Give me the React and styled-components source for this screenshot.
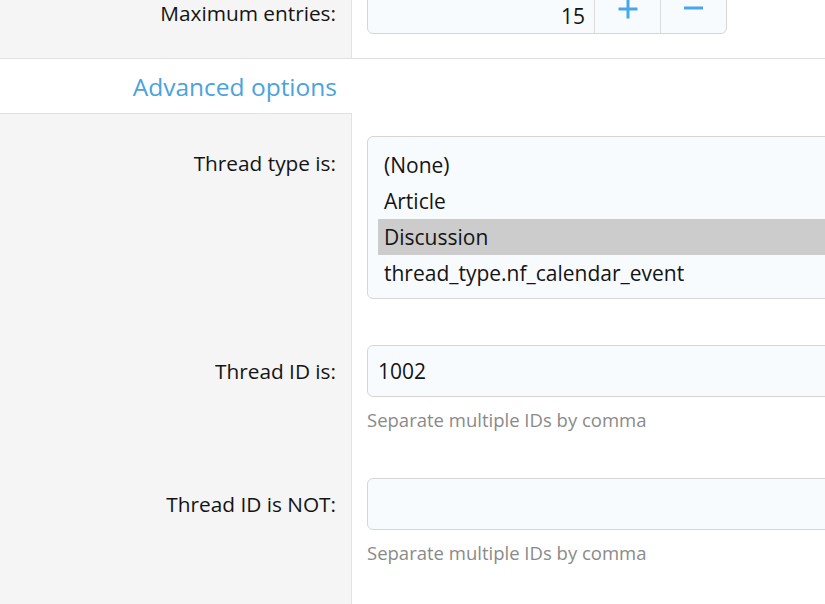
import React from "react";
import styled, { createGlobalStyle } from "styled-components";

const Global = createGlobalStyle`
  html, body { margin: 0; padding: 0; background: #fff; }
  body { overflow: hidden; font-family: "Open Sans", "Noto Sans", sans-serif; color: #141414; }
  * { box-sizing: border-box; }
`;

const Page = styled.div`
  width: 825px;
  height: 604px;
  overflow: hidden;
`;

const Scroll = styled.div`
  margin-top: -17px;
`;

const Block = styled.div`
  display: grid;
  grid-template-columns: 352px 1fr;
  border-bottom: 1px solid #e0e0e0;
`;

const LabelCol = styled.div`
  background: #f5f5f5;
  border-right: 1px solid #e2e2e2;
  padding: 0 15px 0 0;
  text-align: right;
`;

const ValueCol = styled.div`
  padding: 0 0 0 15px;
  min-width: 0;
`;

const Label = styled.div`
  font-size: 20.8px;
  line-height: ${(p) => p.$lh || 28}px;
  white-space: nowrap;
  padding-top: ${(p) => p.$top}px;
  height: ${(p) => p.$h}px;
`;

const Field = styled.div`
  padding-top: ${(p) => p.$top}px;
  height: ${(p) => p.$h}px;
`;

const HeaderRow = styled.div`
  height: 55px;
  border-bottom: 1px solid #e0e0e0;
  display: flex;
  align-items: center;
  justify-content: flex-end;
  width: 352px;
  padding-right: 15px;
  font-size: 24.5px;
  color: #4aa3df;
  white-space: nowrap;
`;

const NumberBox = styled.div`
  display: flex;
  width: 360px;
  height: 51px;
  border: 1px solid #d6d6d6;
  border-radius: 6px;
  background: #f8fbfe;
  overflow: hidden;
`;

const NumberValue = styled.div`
  flex: 1;
  text-align: right;
  padding: 19px 9px 0 0;
  font-size: 21px;
  line-height: 26px;
`;

const StepButton = styled.div`
  width: 66px;
  border-left: 1px solid #dcdcdc;
  display: flex;
  align-items: center;
  justify-content: center;
  padding-bottom: ${(p) => (p.$minus ? 2 : 0)}px;
`;

const ListBox = styled.div`
  width: 620px;
  border: 1px solid #d6d6d6;
  border-radius: 6px;
  background: #f8fbfe;
  padding: 10px 0 7px 10px;
`;

const Option = styled.div`
  height: 36px;
  line-height: 36px;
  padding-left: 6px;
  font-size: 21px;
  white-space: nowrap;
  background: ${(p) => (p.$selected ? "#cccccc" : "transparent")};
`;

const TextInput = styled.div`
  width: 620px;
  height: 52px;
  border: 1px solid #d6d6d6;
  border-radius: 6px;
  background: #f8fbfe;
  padding-left: 10px;
  font-size: 21px;
  line-height: 50px;
`;

const Hint = styled.div`
  margin-top: 10px;
  font-size: 18.5px;
  line-height: 26px;
  color: #8a8a8a;
  white-space: nowrap;
`;

const Plus = () => (
  <svg width="20" height="20" viewBox="0 0 20 20">
    <path d="M10 0.5v19M0.5 10h19" stroke="#47a7eb" strokeWidth="3" fill="none" />
  </svg>
);

const Minus = () => (
  <svg width="19" height="4" viewBox="0 0 19 4">
    <path d="M0 2h19" stroke="#47a7eb" strokeWidth="3" fill="none" />
  </svg>
);

export default function App() {
  return (
    <Page>
      <Global />
      <Scroll>
        <Block>
          <LabelCol>
            <Label $top={18} $lh={24} $h={75}>Maximum entries:</Label>
          </LabelCol>
          <ValueCol>
            <Field $top={0} $h={75}>
              <NumberBox>
                <NumberValue>15</NumberValue>
                <StepButton><Plus /></StepButton>
                <StepButton $minus><Minus /></StepButton>
              </NumberBox>
            </Field>
          </ValueCol>
        </Block>
        <HeaderRow>Advanced options</HeaderRow>
        <Block>
          <LabelCol>
            <Label $top={35} $h={231}>Thread type is:</Label>
            <Label $top={12} $h={133}>Thread ID is:</Label>
            <Label $top={12} $h={200}>Thread ID is NOT:</Label>
          </LabelCol>
          <ValueCol>
            <Field $top={22} $h={231}>
              <ListBox>
                <Option>(None)</Option>
                <Option>Article</Option>
                <Option $selected>Discussion</Option>
                <Option>thread_type.nf_calendar_event</Option>
              </ListBox>
            </Field>
            <Field $top={0} $h={133}>
              <TextInput>1002</TextInput>
              <Hint>Separate multiple IDs by comma</Hint>
            </Field>
            <Field $top={0} $h={200}>
              <TextInput />
              <Hint>Separate multiple IDs by comma</Hint>
            </Field>
          </ValueCol>
        </Block>
      </Scroll>
    </Page>
  );
}
